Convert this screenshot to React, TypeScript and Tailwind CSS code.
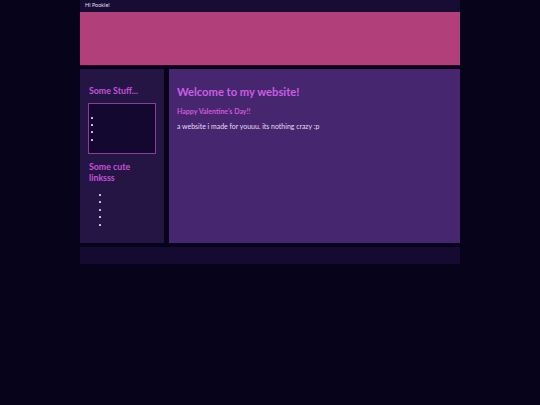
import React from "react";

const font = { fontFamily: "Lato, 'Open Sans', sans-serif" };

function Dots({ n, className }: { n: number; className: string }) {
  return (
    <div className={"flex flex-col gap-[5.4px] " + className}>
      {Array.from({ length: n }).map((_, i) => (
        <div key={i} className="w-[2px] h-[2px] rounded-[0.5px] bg-[#d8c8f0]" />
      ))}
    </div>
  );
}

export default function App() {
  return (
    <div className="min-h-screen w-full bg-[#07031a]" style={font}>
      <div className="mx-auto w-[380px] flex flex-col">
        <div className="h-[12px] bg-[#170c33] flex items-center px-[5px]">
          <span className="text-[5.5px] leading-none text-[#e6def0]">Hi Pookie!</span>
        </div>
        <div className="h-[53px] bg-[#b1407a] shadow-[0_1px_1px_#2a0a26]" />
        <div className="mt-[4px] h-[174px] flex gap-[5px]">
          <div className="w-[84px] bg-[#241545] pt-[16px] px-[8px] flex flex-col">
            <h2 className="ml-[1px] text-[8.8px] leading-[11px] font-bold text-[#c452da]">Some Stuff...</h2>
            <div className="mt-[6.5px] w-[68px] h-[51px] border border-[#8a3d9e] bg-[#120830] pt-[13px] pl-[2px]">
              <Dots n={4} className="" />
            </div>
            <h2 className="mt-[7.5px] ml-[1px] text-[8.8px] leading-[11px] font-bold text-[#c452da]">
              Some cute
              <br />
              linksss
            </h2>
            <Dots n={5} className="mt-[11px] ml-[11px]" />
          </div>
          <div className="flex-1 bg-[#45266f] pt-[15px] px-[8px]">
            <h1 className="text-[11.2px] leading-[15px] font-bold text-[#cc5ee2]">Welcome to my website!</h1>
            <p className="mt-[7.5px] text-[7px] leading-[9px] font-bold text-[#d257d6]">Happy Valentine's Day!!</p>
            <p className="mt-[6.5px] text-[6.95px] leading-[9px] text-[#e8dcf4]">
              a website i made for youuu. its nothing crazy :p
            </p>
          </div>
        </div>
        <div className="mt-[4px] h-[17px] bg-[#150b30]" />
      </div>
    </div>
  );
}
